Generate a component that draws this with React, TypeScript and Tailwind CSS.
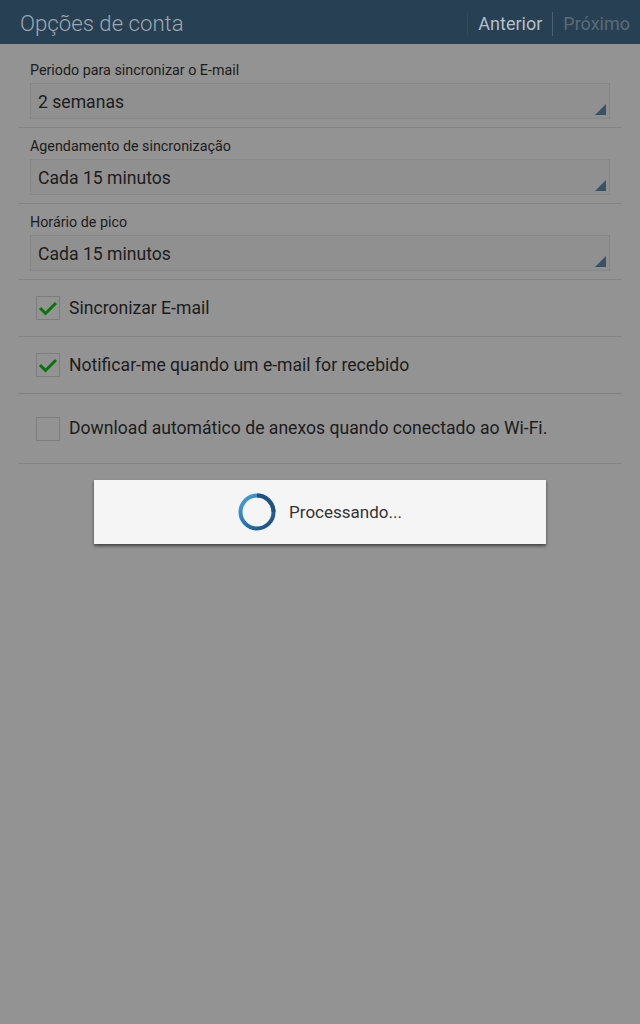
import React from "react";

const Select = ({ label, value }: { label: string; value: string }) => (
  <div className="flex flex-col pt-[10px]">
    <div className="px-[30px] text-[14.3px] leading-[16px] text-[#1c1c1c]">{label}</div>
    <div className="mx-[30px] mt-[5px] mb-[8px] h-[36px] border border-[#878787] bg-[#909090] relative flex items-center">
      <span className="pl-[7px] pt-[3px] text-[17.6px] text-[#1c1c1c]">{value}</span>
      <svg className="absolute right-[3px] bottom-[3px]" width="11" height="11" viewBox="0 0 11 11">
        <polygon points="11,0 11,11 0,11" fill="#3a5264" />
      </svg>
    </div>
    <div className="mx-[18px] h-px bg-[#838383]" />
  </div>
);

const Check = ({ label, checked, h }: { label: string; checked: boolean; h: string }) => (
  <div className="flex flex-col">
    <div className={`flex items-center ${h}`}>
      <div className="ml-[36px] w-[24px] h-[24px] border border-[#7d7d7d] flex items-center justify-center">
        {checked && (
          <svg width="20" height="16" viewBox="0 0 20 16">
            <polyline points="2,8 7.5,13.5 18,3" fill="none" stroke="#0a740a" strokeWidth="3" />
          </svg>
        )}
      </div>
      <span className="ml-[9px] text-[17.6px] text-[#1c1c1c]">{label}</span>
    </div>
    <div className="mx-[18px] h-px bg-[#838383]" />
  </div>
);

export default function App() {
  return (
    <div className="w-[640px] h-[1024px] bg-[#939393] flex flex-col" style={{ fontFamily: "Roboto, 'Noto Sans', sans-serif" }}>
      <div className="h-[44px] bg-[#274053] flex items-center justify-between pl-[20px] pr-[10px] pt-[3px]">
        <span className="text-[22.2px] font-light text-[#9ea8b0]">Opções de conta</span>
        <div className="flex items-center h-full">
          <div className="w-px h-[24px] bg-[#33495a] mr-[10px]" />
          <span className="text-[18px] text-[#b8bfc4]">Anterior</span>
          <div className="w-px h-[24px] bg-[#4e6170] mx-[10px]" />
          <span className="text-[18px] text-[#5a6c78]">Próximo</span>
        </div>
      </div>
      <div className="pt-[8px] flex flex-col">
        <Select label="Periodo para sincronizar o E-mail" value="2 semanas" />
        <Select label="Agendamento de sincronização" value="Cada 15 minutos" />
        <Select label="Horário de pico" value="Cada 15 minutos" />
        <Check label="Sincronizar E-mail" checked h="h-[56px]" />
        <Check label="Notificar-me quando um e-mail for recebido" checked h="h-[56px]" />
        <Check label="Download automático de anexos quando conectado ao Wi-Fi." checked={false} h="h-[69px]" />
      </div>
      <div className="mt-[16px] mx-[94px] h-[64px] bg-[#f5f5f5] shadow-[0_2px_3px_rgba(0,0,0,0.55)] flex items-center justify-center">
        <svg width="38" height="38" viewBox="0 0 38 38">
          <defs>
            <linearGradient id="g" x1="0" y1="0" x2="1" y2="1">
              <stop offset="0" stopColor="#45a6e0" />
              <stop offset="0.5" stopColor="#2a73b0" />
              <stop offset="1" stopColor="#1c4c7c" />
            </linearGradient>
          </defs>
          <circle cx="19" cy="19" r="16.5" fill="none" stroke="url(#g)" strokeWidth="4" />
          <path d="M19 2.5 A16.5 16.5 0 0 1 35.5 19" fill="none" stroke="#1f5384" strokeWidth="4" />
        </svg>
        <span className="ml-[13px] pt-[2px] text-[17px] text-[#333333]">Processando...</span>
      </div>
    </div>
  );
}
